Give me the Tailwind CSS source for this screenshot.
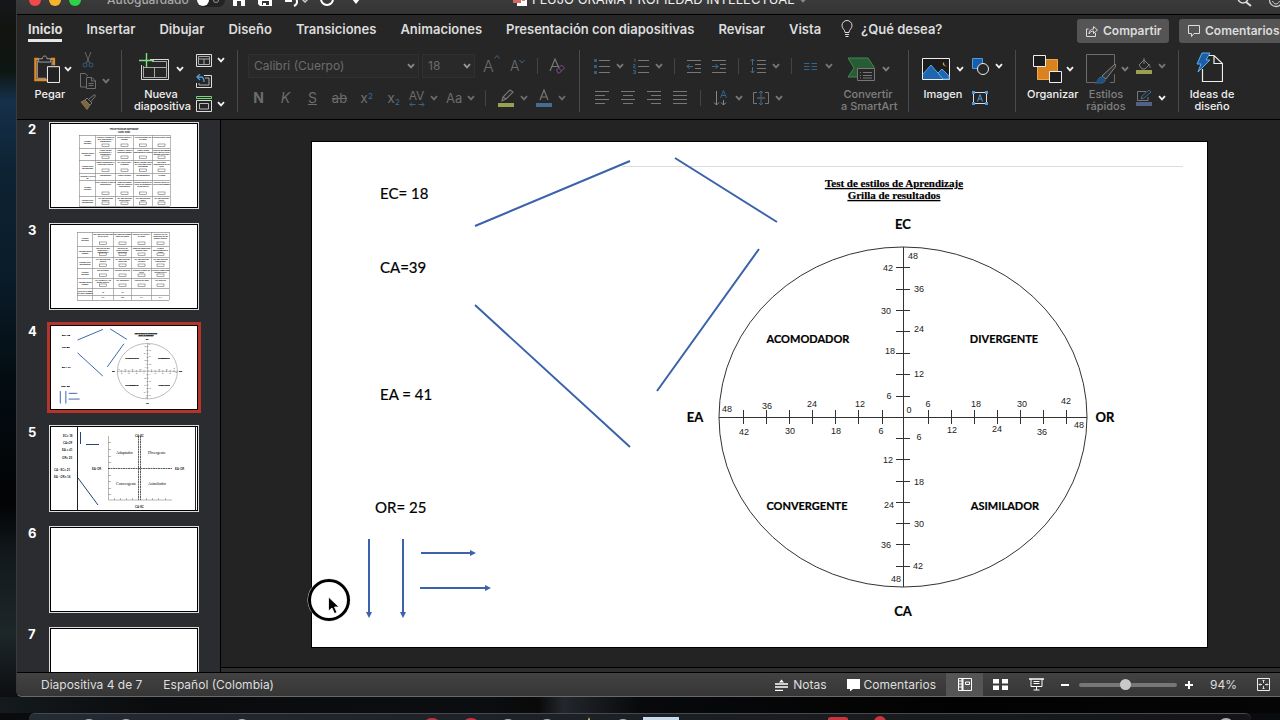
<!DOCTYPE html>
<html lang="es">

<head>
    <meta charset="UTF-8">
    <meta name="viewport" content="width=device-width, initial-scale=1.0">
    <title>FLUJO GRAMA PROPIEDAD INTELECTUAL</title>
    <script src="https://cdn.jsdelivr.net/npm/@tailwindcss/browser@4"></script>
</head>

<body class="h-screen overflow-hidden bg-[#08090b] font-['Inter','Liberation_Sans',sans-serif] text-white">

    <!-- Shared shapes -->
    <svg class="hidden">
        <symbol id="chev" viewBox="0 0 8 6">
            <path d="M1 1.2 4 4.4 7 1.2" fill="none" stroke="currentColor" stroke-width="1.8" />
        </symbol>
    </svg>

    <div class="flex h-full flex-col bg-[linear-gradient(180deg,#15171a_0%,#11130f_5%,#0e1714_10%,#16304a_14%,#0d2233_24%,#0a1c29_38%,#040d13_52%,#020304_70%,#12191c_77%,#1d2629_88%,#0a0b0d_98%)]">

        <!-- App window -->
        <div class="ml-4 flex min-h-0 flex-1 flex-col overflow-hidden rounded-bl-md border-b border-l border-b-[#6a6a6a] border-l-[#3a3a3a] bg-[#262626]">

            <!-- Title bar -->
            <header class="h-[15px] shrink-0 overflow-hidden border-b border-black bg-gradient-to-b from-[#3b3b3b] to-[#343434]">
                <div class="-mt-3.5 flex h-7 items-center">
                    <div class="flex w-[496px] shrink-0 items-center pl-3">
                        <div class="flex gap-2">
                            <button aria-label="Cerrar" class="size-3 rounded-full bg-[#f5484a]"></button>
                            <button aria-label="Minimizar" class="size-3 rounded-full bg-[#f6b52d]"></button>
                            <button aria-label="Maximizar" class="size-3 rounded-full bg-[#2fd145]"></button>
                        </div>
                        <label for="autosave" class="ml-[26px] text-xs font-medium text-[#a8a8a8]">Autoguardado</label>
                        <span class="ml-2 flex h-3.5 w-7 items-center rounded-full bg-[#232323]">
                            <input id="autosave" type="checkbox" class="size-3 appearance-none rounded-full bg-white">
                            <svg class="ml-1 h-2 w-1.5" viewBox="0 0 6 8"><circle cx="3" cy="4" r="2.5" fill="none" stroke="#999" /></svg>
                        </span>
                        <div class="ml-[7px] flex items-center gap-3">
                            <svg class="h-3.5 w-3.5" viewBox="0 0 14 14"><path d="M1 5 7 0l6 5v8H9V8H5v5H1z" fill="#fff" /></svg>
                            <svg class="h-3.5 w-3.5" viewBox="0 0 14 14"><path d="M0 0h14v13H2l-2-2z" fill="#fff" /><path d="M4 8h7v4H4z" fill="#333" /><path d="M5 10h3v2H5z" fill="#fff" /></svg>
                            <svg class="h-3.5 w-6" viewBox="0 0 24 14"><path d="M2 2v6h6M3 7c3-5 10-4 10 2 0 2-1 3-3 4" fill="none" stroke="#fff" stroke-width="2" /><path d="m18 6 3 3 3-3" fill="none" stroke="#ccc" stroke-width="1.5" /></svg>
                            <svg class="h-4 w-3.5" viewBox="0 0 14 16"><circle cx="7" cy="7" r="6" fill="none" stroke="#fff" stroke-width="2" /></svg>
                            <svg class="ml-1 h-3 w-3" viewBox="0 0 12 12"><path d="M2 5h8L6 10z" fill="#fff" /></svg>
                        </div>
                    </div>
                    <svg class="h-3.5 w-3.5 shrink-0" viewBox="0 0 14 14"><path d="M4 0h10v13H4z" fill="#fff" /><path d="M0 2h8v8H0z" fill="#d06a62" /><path d="M9 4h3v4H9z" fill="#d98a84" /></svg>
                    <h1 class="ml-[5px] text-[13px] whitespace-nowrap text-[#f0f0f0]">FLUJO GRAMA PROPIEDAD INTELECTUAL</h1>
                    <svg class="ml-1 h-1.5 w-2 text-[#888]"><use href="#chev" /></svg>
                    <div class="ml-auto flex gap-4">
                        <svg class="h-4 w-4" viewBox="0 0 16 16"><circle cx="7" cy="6" r="5" fill="none" stroke="#ddd" stroke-width="1.5" /><path d="m10 10 5 4" stroke="#ddd" stroke-width="2" /></svg>
                        <svg class="-mr-1 h-4 w-4" viewBox="0 0 16 16"><circle cx="8" cy="8" r="6.5" fill="none" stroke="#ccc" stroke-width="1.3" /><path d="M4.500 9c1.500 4 5.500 4 7 0" fill="none" stroke="#ccc" /></svg>
                    </div>
                </div>
            </header>

            <!-- Ribbon tabs -->
            <nav class="flex h-8 shrink-0 items-center overflow-hidden pl-[11px] text-[13px] font-semibold whitespace-nowrap text-[#dcdcdc]">
                <div class="flex shrink-0 items-start gap-6">
                    <button class="border-b-3 border-[#e8e8e8] pb-px font-bold leading-[18px]">Inicio</button>
                    <button class="leading-[18px]">Insertar</button>
                    <button class="leading-[18px]">Dibujar</button>
                    <button class="leading-[18px]">Diseño</button>
                    <button class="leading-[18px]">Transiciones</button>
                    <button class="leading-[18px]">Animaciones</button>
                    <button class="leading-[18px]">Presentación con diapositivas</button>
                    <button class="leading-[18px]">Revisar</button>
                    <button class="leading-[18px]">Vista</button>
                    <button class="-ml-1 flex items-center gap-2 leading-[18px]">
                        <svg class="h-[18px] w-3" viewBox="0 0 12 18" fill="none" stroke="currentColor"><path d="M4 12.500C4 9.500 1 9 1 5.500a5 5 0 0 1 10 0C11 9 8 9.500 8 12.500zM4 14.500h4M4.500 16.500h3" /></svg>
                        ¿Qué desea?
                    </button>
                </div>
                <div class="ml-auto flex shrink-0 gap-2.5">
                    <button class="flex h-6 w-[92px] items-center gap-[5px] rounded-[3px] bg-[#555] pl-[9px] text-xs">
                        <svg class="h-3 w-3" viewBox="0 0 12 12" fill="none" stroke="#ddd"><path d="M2.500 4H.5v7.500h9V8M3 9c0-3.500 2-5 4.500-5V1.500l4 3.500-4 3.500V6C5.500 6 4 7 3 9z" /></svg>
                        Compartir
                    </button>
                    <button class="-mr-1 flex h-6 w-[105px] items-center gap-[5px] rounded-l-[3px] bg-[#555] pl-[9px] text-xs">
                        <svg class="h-3 w-3" viewBox="0 0 12 12" fill="none" stroke="#ddd"><path d="M.5.5h11v8H6l-2.500 3v-3h-3z" /></svg>
                        Comentarios
                    </button>
                </div>
            </nav>

            <!-- Ribbon -->
            <section class="flex h-[73px] shrink-0 items-start overflow-hidden border-b border-black pt-[3px] text-[11px] leading-3 font-medium text-[#f0f0f0]">

                <!-- Clipboard -->
                <div class="flex h-[62px] w-[105px] shrink-0 border-r border-[#4a4a4a] pl-[11px]">
                    <button class="w-11 self-start">
                        <span class="flex h-[38px] items-center gap-1 pl-1.5">
                            <svg class="h-8 w-7" viewBox="0 0 28 32" fill="none"><path d="M5 5H1.500v23H14M18 5h3.500v7" stroke="#e08a24" stroke-width="2.500" /><path d="M3.500 7v19H13M19.500 7v5" stroke="#b9b9b9" /><path d="M5 8.500V5h4c0-4 5-4 5 0h4v3.500z" stroke="#a9a9a9" /><path d="M14.500 13.500h13v17h-13z" fill="#222" stroke="#fff" /></svg>
                            <svg class="h-1.5 w-2 shrink-0"><use href="#chev" /></svg>
                        </span>
                        Pegar
                    </button>
                    <div class="ml-2 grid w-8 grid-rows-3 text-[#777]">
                        <button aria-label="Cortar" class="flex items-center">
                            <svg class="h-4 w-4" viewBox="0 0 16 16" fill="none"><path d="m5 0 4.500 11M11 0 6.500 11" stroke="#666" /><circle cx="5" cy="13" r="2" stroke="#2f5f86" /><circle cx="11" cy="13" r="2" stroke="#2f5f86" /></svg>
                        </button>
                        <button aria-label="Copiar" class="flex items-center gap-1.5">
                            <svg class="h-4 w-4 shrink-0" viewBox="0 0 16 16" fill="none" stroke="#6f6f6f"><path d="M6 14H.5V.5H5L8 3M6.500 4.500H12l3.500 3.500v7.500h-9zM11.500 4.500V8h4M8.500 10.500h5M8.500 12.500h5" /></svg>
                            <svg class="h-1.5 w-2 shrink-0"><use href="#chev" /></svg>
                        </button>
                        <button aria-label="Copiar formato" class="flex items-center">
                            <svg class="h-4 w-4" viewBox="0 0 16 16" fill="none" stroke="#777"><path d="m1 8 4-2 5 5-3 4.500z" fill="#7c6843" stroke="#8a744b" /><path d="m5 6 2-2 5 5-2 2zM9 5l5.500-4.500L15.500 2 11 7.500" /></svg>
                        </button>
                    </div>
                </div>

                <!-- Slides -->
                <div class="flex h-[62px] w-[116px] shrink-0 border-r border-[#4a4a4a] pl-3">
                    <button class="w-[54px] self-start whitespace-nowrap">
                        <span class="flex h-[38px] items-center gap-1.5 pl-[5px]">
                            <svg class="h-8 w-[31px] shrink-0" viewBox="0 0 31 32" fill="none"><path d="M11 6.500h18.500v20h-27V12" stroke="#d8d8d8" /><path d="M13 8.500h14.500v16h-23V13M4.500 14.500h23M15.500 15v9.500" stroke="#a8a8a8" /><path d="M7.500 0v14M0 7.500h15" stroke="#7de07f" stroke-width="1.400" /></svg>
                            <svg class="h-1.5 w-2 shrink-0"><use href="#chev" /></svg>
                        </span>
                        Nueva<br>diapositiva
                    </button>
                    <div class="ml-2 grid w-8 grid-rows-3">
                        <button aria-label="Diseño de diapositiva" class="flex items-center gap-1">
                            <svg class="h-[13px] w-4 shrink-0" viewBox="0 0 16 13" fill="none"><path d="M.5.5h15v12H.5z" stroke="#ddd" /><path d="M2.500 2.500h11v8h-11zM2.500 5h11M8 5v5.500" stroke="#aaa" /></svg>
                            <svg class="ml-px h-1.5 w-2 shrink-0"><use href="#chev" /></svg>
                        </button>
                        <button aria-label="Restablecer" class="flex items-center">
                            <svg class="h-3.5 w-4" viewBox="0 0 16 14" fill="none"><path d="M8 1.500h7.500v12H.5V9" stroke="#ddd" /><path d="M9 4h4v7H3V9" stroke="#aaa" /><path d="M4 0 1 3l3 3M1 3h4c2 0 3 2 3 5" stroke="#4d9fdb" stroke-width="1.300" /></svg>
                        </button>
                        <button aria-label="Sección" class="flex items-center gap-1 pt-1">
                            <svg class="h-4 w-4 shrink-0" viewBox="0 0 16 16" fill="none"><path d="M.5 2.500V.5h15v2z" stroke="#76d879" /><path d="M.5 4.500h15v11H.5z" stroke="#ddd" /><path d="M3.500 7.500h9v5.500h-9z" stroke="#bbb" /></svg>
                            <svg class="ml-px h-1.5 w-2 shrink-0"><use href="#chev" /></svg>
                        </button>
                    </div>
                </div>

                <!-- Font -->
                <div class="flex h-[62px] w-[342px] shrink-0 flex-col gap-2 border-r border-[#4a4a4a] pt-1 text-[#6c6c6c]">
                    <div class="flex h-6 items-center pl-2.5">
                        <span class="relative flex h-6 w-[171px] items-center">
                            <select aria-label="Fuente" class="size-full appearance-none border border-[#303030] bg-[#292929] pl-[5px] text-xs font-normal">
                                <option>Calibri (Cuerpo)</option>
                            </select>
                            <svg class="pointer-events-none absolute right-1 h-1.5 w-2 text-[#888]"><use href="#chev" /></svg>
                        </span>
                        <span class="relative ml-[3px] flex h-6 w-[53px] items-center">
                            <select aria-label="Tamaño" class="size-full appearance-none border border-[#303030] bg-[#292929] pl-[5px] text-xs font-normal">
                                <option>18</option>
                            </select>
                            <svg class="pointer-events-none absolute right-1 h-1.5 w-2 text-[#999]"><use href="#chev" /></svg>
                        </span>
                        <button aria-label="Aumentar fuente" class="ml-2 flex w-[17px] text-base font-light">A<svg class="h-1.5 w-1.5 shrink-0" viewBox="0 0 6 6"><path d="m.5 4.500 2.500-3 2.500 3" fill="none" stroke="#3b6485" /></svg></button>
                        <button aria-label="Disminuir fuente" class="ml-2.5 flex w-4 items-center text-sm font-light">A<svg class="-mt-2 h-1.5 w-1.5 shrink-0" viewBox="0 0 6 6"><path d="m.5 1 2.500 3L5.500 1" fill="none" stroke="#3b6485" /></svg></button>
                        <span class="mx-[11px] h-4 w-px bg-[#444]"></span>
                        <button aria-label="Borrar formato">
                            <svg class="h-4 w-[18px]" viewBox="0 0 18 16" fill="none"><path d="M1 13 6 1l4 9M3 8.500h6" stroke="#777" stroke-width="1.200" /><path d="m7.500 12 5-5 3 3-5 5H9z" stroke="#804a8c" /><path d="m9.500 10 3 3" stroke="#804a8c" /></svg>
                        </button>
                    </div>
                    <div class="flex h-6 items-center pl-[7px] text-sm font-normal">
                        <button aria-label="Negrita" class="w-[27px] font-bold">N</button>
                        <button aria-label="Cursiva" class="w-[27px] italic">K</button>
                        <button aria-label="Subrayado" class="w-[27px] underline">S</button>
                        <button aria-label="Tachado" class="w-[27px] text-[13px] line-through">ab</button>
                        <button aria-label="Superíndice" class="w-[27px]">x<sup class="text-[8px] text-[#3b6d9a]">2</sup></button>
                        <button aria-label="Subíndice" class="w-[27px]">x<sub class="text-[8px] text-[#3b6d9a]">2</sub></button>
                        <button aria-label="Espaciado entre caracteres" class="flex items-center gap-1 text-xs">
                            <span class="flex w-[19px] flex-col items-center leading-3">AV<svg class="h-[5px] w-4" viewBox="0 0 16 5"><path d="M3 .5 1 2.500l2 2M1 2.500h5.500M13 .5l2 2-2 2M15 2.500H9.500" fill="none" stroke="#3b6485" /></svg></span>
                            <svg class="h-1.5 w-2"><use href="#chev" /></svg>
                        </button>
                        <button aria-label="Mayúsculas y minúsculas" class="ml-2 flex items-center gap-[5px] text-[13px]">Aa<svg class="h-1.5 w-2"><use href="#chev" /></svg></button>
                        <span class="mr-3 ml-2.5 h-4 w-px bg-[#444]"></span>
                        <button aria-label="Resaltado" class="flex items-center gap-1.5">
                            <svg class="h-[18px] w-4" viewBox="0 0 16 18"><path d="m4 12 1-4 7-7 3 2-7 7zM5 8l3 2" fill="none" stroke="#777" stroke-width="1.200" /><path d="M0 14h16v4H0z" fill="#98a052" /></svg>
                            <svg class="h-1.5 w-2"><use href="#chev" /></svg>
                        </button>
                        <button aria-label="Color de fuente" class="ml-2 flex items-center gap-1.5">
                            <svg class="h-[18px] w-4" viewBox="0 0 16 18"><path d="M4 11 8 1l4 10M5.500 8h5" fill="none" stroke="#777" stroke-width="1.200" /><path d="M0 14h16v4H0z" fill="#436c91" /></svg>
                            <svg class="h-1.5 w-2"><use href="#chev" /></svg>
                        </button>
                    </div>
                </div>

                <!-- Paragraph -->
                <div class="flex h-[62px] w-[329px] shrink-0 border-r border-[#4a4a4a] pl-3.5 text-[#777]">
                    <div class="flex w-[247px] flex-col gap-2 pt-1">
                        <div class="flex h-6 items-center gap-[9px]">
                            <button aria-label="Viñetas" class="flex items-center gap-1.5">
                                <svg class="h-4 w-4" viewBox="0 0 16 16"><path d="M5 2.500h11M5 8.500h11M5 14.500h11" stroke="#777" /><path d="M0 1h3v3H0zM0 7h3v3H0zM0 13h3v3H0z" fill="#325d80" /></svg>
                                <svg class="h-1.5 w-2"><use href="#chev" /></svg>
                            </button>
                            <button aria-label="Numeración" class="flex items-center gap-1.5">
                                <svg class="h-4 w-4" viewBox="0 0 16 16"><path d="M5 2.500h11M5 8.500h11M5 14.500h11" stroke="#777" /><path d="M1 1h1v3M0 6.500h2v2H.5v1.500H3M0 12.500h2.500v3H0M1 14h1.500" fill="none" stroke="#325d80" /></svg>
                                <svg class="h-1.5 w-2"><use href="#chev" /></svg>
                            </button>
                            <span class="mx-0.5 h-4 w-px bg-[#444]"></span>
                            <button aria-label="Disminuir sangría"><svg class="h-4 w-4" viewBox="0 0 16 16" fill="none"><path d="M1 2.500h14M9 6.500h6M9 10.500h6M1 14.500h14" stroke="#777" /><path d="M7 8.500H1M3.500 6 1 8.500 3.500 11" stroke="#3b6d94" /></svg></button>
                            <button aria-label="Aumentar sangría"><svg class="h-4 w-4" viewBox="0 0 16 16" fill="none"><path d="M1 2.500h14M9 6.500h6M9 10.500h6M1 14.500h14" stroke="#777" /><path d="M1 8.500h6M4.500 6 7 8.500 4.500 11" stroke="#3b6d94" /></svg></button>
                            <span class="mx-0.5 h-4 w-px bg-[#444]"></span>
                            <button aria-label="Interlineado" class="flex items-center gap-1.5">
                                <svg class="h-4 w-4" viewBox="0 0 16 16" fill="none"><path d="M7 2.500h9M7 6.500h9M7 10.500h9M7 14.500h9" stroke="#777" /><path d="M2.500 1v6M.5 3l2-2 2 2M2.500 9v6M.5 13l2 2 2-2" stroke="#3b6d94" /></svg>
                                <svg class="h-1.5 w-2"><use href="#chev" /></svg>
                            </button>
                            <span class="mx-0.5 h-4 w-px bg-[#444]"></span>
                            <button aria-label="Columnas" class="flex items-center gap-1.5">
                                <svg class="h-4 w-4" viewBox="0 0 16 16"><path d="M1 5.500h5.500M1 8.500h5.500M1 11.500h5.500M8.500 5.500H14M8.500 8.500H14M8.500 11.500H14" stroke="#34658c" /></svg>
                                <svg class="h-1.5 w-2"><use href="#chev" /></svg>
                            </button>
                        </div>
                        <div class="flex h-6 items-center gap-2.5">
                            <button aria-label="Alinear a la izquierda"><svg class="h-4 w-4" viewBox="0 0 16 16" stroke="#777"><path d="M1 1.500h14M1 5.500h10M1 9.500h14M1 13.500h10" /></svg></button>
                            <button aria-label="Centrar"><svg class="h-4 w-4" viewBox="0 0 16 16" stroke="#777"><path d="M1 1.500h14M3 5.500h10M1 9.500h14M3 13.500h10" /></svg></button>
                            <button aria-label="Alinear a la derecha"><svg class="h-4 w-4" viewBox="0 0 16 16" stroke="#777"><path d="M1 1.500h14M5 5.500h10M1 9.500h14M5 13.500h10" /></svg></button>
                            <button aria-label="Justificar"><svg class="h-4 w-4" viewBox="0 0 16 16" stroke="#777"><path d="M1 1.500h14M1 5.500h14M1 9.500h14M1 13.500h14" /></svg></button>
                            <span class="mx-0.5 h-4 w-px bg-[#444]"></span>
                            <button aria-label="Dirección del texto" class="flex items-center gap-1.5">
                                <svg class="h-4 w-4" viewBox="0 0 16 16" fill="none"><path d="M3.500 1v14M1 12.500 3.500 15 6 12.500M10.500 10v5M8 12.500l2.500 2.500 2.500-2.500" stroke="#888" /><path d="m7.500 8 3-7.500 3 7.500M8.500 5.500h4" stroke="#34658c" /></svg>
                                <svg class="h-1.5 w-2"><use href="#chev" /></svg>
                            </button>
                            <button aria-label="Alinear texto" class="flex items-center gap-1.5">
                                <svg class="h-4 w-4" viewBox="0 0 16 16" fill="none"><path d="M4 2.500H.5v11H4M12 2.500h3.500v11H12M4 8h8" stroke="#777" /><path d="M8 7V1M6 3l2-2 2 2M8 9v6M6 13l2 2 2-2" stroke="#3b6d94" /></svg>
                                <svg class="h-1.5 w-2"><use href="#chev" /></svg>
                            </button>
                        </div>
                    </div>
                    <button class="w-[54px] self-start whitespace-nowrap text-[#808080]">
                        <span class="flex h-[38px] items-center gap-1.5 pl-[7px]">
                            <svg class="h-6 w-7 shrink-0" viewBox="0 0 28 24"><path d="M0 1h20l6 9v3H10v7H0l6-9z" fill="#285c34" stroke="#3f8a4e" /><path d="M9.500 11.500h17v12h-17z" fill="#262626" stroke="#777" /><path d="M12 15.500h1M12 18.500h1M12 21h1M15 15.500h9M15 18.500h9M15 21h9" stroke="#777" /></svg>
                            <svg class="h-1.5 w-2 shrink-0"><use href="#chev" /></svg>
                        </span>
                        Convertir<br>a SmartArt
                    </button>
                </div>

                <!-- Insert -->
                <div class="flex h-[62px] w-[107px] shrink-0 border-r border-[#4a4a4a] pl-[13px]">
                    <button class="w-[42px] self-start">
                        <span class="flex h-[38px] items-center gap-1.5">
                            <svg class="h-[22px] w-7 shrink-0" viewBox="0 0 28 22"><path d="M.5.5h27v21H.5z" fill="#1c1c1c" stroke="#eee" /><path d="M1 16 9 7l12 14H1z" fill="#1f66b0" /><path d="m1 16 8-9 12 14" fill="none" stroke="#55a5e6" /><path d="m16 15 4-4 7 7v3h-6z" fill="#1f66b0" stroke="#55a5e6" /><path d="M22 4c0 3 1 4 3 4-3 1-6-2-3-4z" fill="#e8913a" /></svg>
                            <svg class="h-1.5 w-2 shrink-0"><use href="#chev" /></svg>
                        </span>
                        Imagen
                    </button>
                    <div class="ml-2 flex flex-col gap-2 pt-1">
                        <button aria-label="Formas" class="flex h-6 items-center gap-1.5">
                            <svg class="h-[17px] w-[17px]" viewBox="0 0 17 17"><path d="M.5.500h10v10H.5z" fill="#1a5da8" stroke="#4a9de0" /><circle cx="11" cy="11" r="5.500" fill="#262626" stroke="#eee" /></svg>
                            <svg class="h-1.5 w-2"><use href="#chev" /></svg>
                        </button>
                        <button aria-label="Cuadro de texto" class="flex h-6 items-center">
                            <svg class="h-3.5 w-4" viewBox="0 0 16 14"><path d="M1.500 1.500h13v11h-13z" fill="none" stroke="#ddd" /><path d="M0 0h3v3H0zM13 0h3v3h-3zM0 11h3v3H0zM13 11h3v3h-3z" fill="#4a9de0" /><path d="m5.500 10.500 2.500-7 2.500 7M6.500 8h3" fill="none" stroke="#4a9de0" /></svg>
                        </button>
                    </div>
                </div>

                <!-- Arrange -->
                <div class="flex h-[62px] w-[163px] shrink-0 border-r border-[#4a4a4a] pl-[11px]">
                    <button class="w-[50px] self-start">
                        <span class="flex h-[38px] items-center gap-1 pl-1.5">
                            <svg class="h-7 w-[29px] shrink-0" viewBox="0 0 29 28"><path d="M4.500 4.500h20v20h-20z" fill="#d9821f" stroke="#f0a648" /><path d="M.5.500h12v11H.5zM16.500 16.500h12v11h-12z" fill="#1d1d1d" stroke="#eee" /></svg>
                            <svg class="h-1.5 w-2 shrink-0"><use href="#chev" /></svg>
                        </span>
                        Organizar
                    </button>
                    <button class="ml-[9px] w-10 self-start text-[#808080]">
                        <span class="flex h-[38px] items-center gap-[5px]">
                            <svg class="h-[30px] w-[30px] shrink-0" viewBox="0 0 30 30" fill="none"><path d="M17 28.500H.5V.5h28v10M28.500 20v8.500H24" stroke="#6d6d6d" /><path d="m16 22 13-12 1 2-10 13z" fill="#333" stroke="#888" /><path d="M9 29c3 0 2-5 6-6 5 0 6 5 1 6z" fill="#1f4f7c" stroke="#31648f" /></svg>
                            <svg class="h-1.5 w-2 shrink-0"><use href="#chev" /></svg>
                        </span>
                        Estilos<br>rápidos
                    </button>
                    <div class="ml-2.5 flex flex-col gap-2 pt-1">
                        <button aria-label="Relleno de forma" class="flex h-6 items-center gap-1.5">
                            <svg class="h-4 w-4" viewBox="0 0 16 16"><path d="m3 7 5-5 5 5-4 4H6zM8 6V0M13 6c1 2 1 3 1 4" fill="none" stroke="#808080" /><path d="M0 12h16v4H0z" fill="#98a052" /></svg>
                            <svg class="h-1.5 w-2 text-[#777]"><use href="#chev" /></svg>
                        </button>
                        <button aria-label="Contorno de forma" class="flex h-6 items-center gap-1.5">
                            <svg class="h-4 w-4" viewBox="0 0 16 16"><path d="M10 1.500H1.500v9H12V7" fill="none" stroke="#777" /><path d="m5 9 1-3 7-6 2 2-7 6z" fill="none" stroke="#3b6d94" /><path d="M0 12h16v4H0z" fill="#506387" /></svg>
                            <svg class="h-1.5 w-2"><use href="#chev" /></svg>
                        </button>
                    </div>
                </div>

                <!-- Designer -->
                <button class="ml-2.5 w-[46px] shrink-0 whitespace-nowrap">
                    <span class="flex h-[38px] items-center justify-center pr-1.5 pb-1">
                        <svg class="h-[31px] w-[27px]" viewBox="0 0 27 31"><path d="M10 3.500h8l8.500 8v18H6.500V17M18 3.500v8h8.500" fill="none" stroke="#eee" stroke-width="1.200" /><path d="M6 1h8l-4 7h4L2 20l3-8H1z" fill="#1c5ea6" stroke="#5db0f0" /></svg>
                    </span>
                    Ideas de<br>diseño
                </button>
            </section>

            <!-- Thumbnails and slide canvas -->
            <div class="flex min-h-0 flex-1">
                <aside class="w-[204px] shrink-0 overflow-hidden border-r border-black bg-[#2b2c30] pt-0.5 pl-[11px]">
                    <ol class="flex flex-col gap-3.5 text-[13px] leading-[14px] font-bold">
                        <li class="flex h-[87px] shrink-0"><span class="w-[21px]">2</span><svg id="thumb-2" viewBox="0 0 146 83" class="h-[87px] w-[150px] border border-[#ddd] bg-white p-px outline-1 -outline-offset-2 outline-black"></svg></li>
                        <li class="flex h-[87px] shrink-0"><span class="w-[21px]">3</span><svg id="thumb-3" viewBox="0 0 146 83" class="h-[87px] w-[150px] border border-[#ddd] bg-white p-px outline-1 -outline-offset-2 outline-black"></svg></li>
                        <li class="flex h-[87px] shrink-0"><span class="w-[21px]">4</span><svg viewBox="0 0 895 505" class="h-[87px] w-[150px] border border-[#b5352a] bg-white p-px ring-2 ring-[#b5352a] outline-1 -outline-offset-2 outline-black [--hair:2] [--line:6] [--text-edge:1]"><use href="#slide-content" /></svg></li>
                        <li class="flex h-[87px] shrink-0"><span class="w-[21px]">5</span>
                            <svg viewBox="0 0 146 83" class="h-[87px] w-[150px] border border-[#ddd] bg-white p-px outline-1 -outline-offset-2 outline-black">
                                <path d="M26.500 0v83M144.500 0v83" stroke="#222" />
                                <path d="M29.500 5v12M35 17.500h13M27 51l20 27" stroke="#27427c" fill="none" />
                                <path d="M57.500 9v64H121M57 15.500h3M57 22.500h3M57 29.500h3M57 35.500h3M57 48.500h3M57 54.500h3M57 61.500h3M57 67.500h3M63.500 71v2M69.500 71v2M75.500 71v2M81.500 71v2M95.500 71v2M101.500 71v2M107.500 71v2M114.500 71v2" stroke="#888" stroke-width=".6" fill="none" />
                                <path d="M87.500 9v64M89.500 9v64M57 41.500h64" stroke="#333" stroke-width=".8" stroke-dasharray="2 .5" />
                                <g font-family="Lato" font-weight="700" font-size="3" fill="#222">
                                    <text x="12" y="10">EC= 18</text><text x="12" y="17">CA=39</text><text x="11" y="24">EA = 41</text><text x="11" y="32">OR= 25</text>
                                    <text x="3" y="44">CA - EC= 21</text><text x="3" y="51">EA - OR= 16</text>
                                    <text x="84" y="10">CA-EC</text><text x="84" y="81">CA-EC</text><text x="41" y="43">EA-OR</text><text x="124" y="43">EA-OR</text>
                                </g>
                                <g font-family="Liberation Serif" font-weight="400" font-size="4">
                                    <text x="65" y="27">Adaptador</text><text x="97" y="27">Divergente</text>
                                    <text x="65" y="58">Convergente</text><text x="97" y="58">Asimilador</text>
                                </g>
                            </svg>
                        </li>
                        <li class="flex h-[87px] shrink-0"><span class="w-[21px]">6</span><svg class="h-[87px] w-[150px] border border-[#ddd] bg-white outline-1 -outline-offset-2 outline-black"></svg></li>
                        <li class="flex h-[87px] shrink-0"><span class="w-[21px]">7</span><svg class="h-[87px] w-[150px] border border-[#ddd] bg-white outline-1 -outline-offset-2 outline-black"></svg></li>
                    </ol>
                </aside>

                <div class="flex min-w-0 flex-1 flex-col bg-[#232323]">
                    <main class="relative min-h-0 flex-1 border-b border-black pt-[22px] pr-[73px] pl-[91px]">
                        <svg viewBox="0 0 895 505" class="w-full bg-white outline-1 outline-black">
                            <g id="slide-content">
                                <path d="M310 24.500h561" stroke="#dcdcdc" />
                                <g font-family="Lato, sans-serif" font-size="15" font-weight="400" stroke="#000" class="[stroke-width:var(--text-edge,0.2)]">
                                    <text x="68" y="57">EC= 18</text>
                                    <text x="68" y="131">CA=39</text>
                                    <text x="68" y="258">EA = 41</text>
                                    <text x="63" y="371">OR= 25</text>
                                </g>
                                <g fill="none" stroke="#3b62ab" class="[stroke-width:var(--line,2)]">
                                    <path d="m163 84 155-65M363 16l102 64M447 107 345 249M163 163l155 142" />
                                    <path d="M57 397v73M91 397v73M109 411h49M108 446h65" />
                                </g>
                                <path d="M54 470h6l-3 6zM88 470h6l-3 6zM158 408v6l6-3zM173 443v6l6-3z" fill="#3b62ab" />
                                <g font-family="Liberation Serif, serif" font-size="11" font-weight="700" text-anchor="middle" text-decoration="underline" stroke="#000" class="[stroke-width:var(--text-edge,0.2)]">
                                    <text x="582" y="45">Test de estilos de Aprendizaje</text>
                                    <text x="582" y="57">Grilla de resultados</text>
                                </g>
                                <g fill="none" stroke="#333" class="[stroke-width:var(--hair,1)]">
                                    <ellipse cx="591" cy="275" rx="184" ry="170" />
                                    <path d="M407 275.500h368M591.500 105v340" />
                                    <path d="M431.500 268v14M454.500 268v14M477.500 268v14M500.500 268v14M523.500 268v14M546.500 268v14M570.500 268v14M616.500 268v14M639.500 268v14M662.500 268v14M685.500 268v14M708.500 268v14M731.500 268v14M754.500 268v14" />
                                    <path d="M584 125.500h14M584 147.500h14M584 168.500h14M584 189.500h14M584 211.500h14M584 232.500h14M584 254.500h14M584 296.500h14M584 317.500h14M584 339.500h14M584 360.500h14M584 381.500h14M584 402.500h14M584 424.500h14" />
                                </g>
                                <g font-family="Lato, sans-serif" font-weight="700" text-anchor="middle" stroke="#000" class="[stroke-width:var(--text-edge,0.2)]">
                                    <g font-size="13">
                                        <text x="591" y="87">EC</text><text x="591" y="474">CA</text><text x="383" y="280">EA</text><text x="793" y="280">OR</text>
                                    </g>
                                    <g font-size="11">
                                        <text x="496" y="201">ACOMODADOR</text><text x="692" y="201">DIVERGENTE</text><text x="495" y="368">CONVERGENTE</text><text x="693" y="368">ASIMILADOR</text>
                                    </g>
                                </g>
                                <g id="scale" font-family="Liberation Sans, sans-serif" font-size="9" font-weight="400" text-anchor="middle" fill="#222"></g>
                            </g>
                        </svg>

                        <!-- Pointer with click halo -->
                        <svg class="absolute top-[458px] left-[86px] h-11 w-11" viewBox="0 0 44 44">
                            <circle cx="22" cy="22" r="21" fill="none" stroke="#ddd" stroke-width="1" />
                            <circle cx="22" cy="22" r="19.500" fill="#fff" stroke="#000" stroke-width="3" />
                            <path d="M21.500 19v14l3.500-3 2.500 5.500 2.500-1-2.500-5.500h4.500z" stroke="#fff" stroke-width=".8" />
                        </svg>
                    </main>
                    <div class="h-1 shrink-0 bg-[#2e2e2e]"></div>
                </div>
            </div>

            <!-- Status bar -->
            <footer class="flex h-6 shrink-0 items-center overflow-hidden border-t border-black bg-gradient-to-b from-[#424242] to-[#363636] pl-6 text-xs whitespace-nowrap text-[#dedede]">
                <span>Diapositiva 4 de 7</span>
                <span class="ml-[21px]">Español (Colombia)</span>
                <div class="ml-auto flex h-full items-center">
                    <button class="flex items-center gap-[5px]">
                        <svg class="h-3 w-[13px]" viewBox="0 0 13 12"><path d="M4 3.500 6.500.5 9 3.500z" fill="#fff" /><path d="M0 5h13M0 8h13M0 11.300h8" stroke="#fff" stroke-width="1.300" /></svg>
                        Notas
                    </button>
                    <button class="ml-5 flex items-center gap-1">
                        <svg class="h-3 w-[13px]" viewBox="0 0 13 12"><path d="M0 0h13v10H6l-3 2.500V10H0z" fill="#fff" /></svg>
                        Comentarios
                    </button>
                    <button aria-label="Normal" class="ml-2.5 flex h-full w-[37px] items-center justify-center bg-[#555]">
                        <svg class="h-[13px] w-3.5" viewBox="0 0 14 13" fill="none" stroke="#fff"><path d="M.5.5h13v12H.5z" /><path d="M4.500 1v11" stroke-width="2" /><path d="M1 3h3M1 6h3M1 9h3" /><path d="M7.500 4h4v2.500h-4z" /></svg>
                    </button>
                    <button aria-label="Clasificador" class="ml-2.5">
                        <svg class="h-[11px] w-[15px]" viewBox="0 0 15 11" fill="#fff"><path d="M0 0h6v4.500H0zM9 0h6v4.500H9zM0 6.500h6V11H0zM9 6.500h6V11H9z" /></svg>
                    </button>
                    <button aria-label="Presentación" class="ml-[21px]">
                        <svg class="h-[13px] w-[15px]" viewBox="0 0 15 13" fill="none" stroke="#fff"><path d="M0 1h15" stroke-width="1.500" /><path d="M2 1v7.500h11V1M4.500 3.500h6M4.500 5.500h6M7.500 9v3M4.500 12h6" /></svg>
                    </button>
                    <button aria-label="Alejar" class="ml-[17px] h-0.5 w-2 bg-white"></button>
                    <input aria-label="Zoom" type="range" value="47" class="ml-2.5 h-1 w-[98px] appearance-none rounded-full bg-[#777] [&::-webkit-slider-thumb]:size-[11px] [&::-webkit-slider-thumb]:appearance-none [&::-webkit-slider-thumb]:rounded-full [&::-webkit-slider-thumb]:bg-[#c9c9c9]">
                    <button aria-label="Acercar" class="ml-2">
                        <svg class="h-2 w-2" viewBox="0 0 8 8"><path d="M0 4h8M4 0v8" stroke="#fff" stroke-width="2" /></svg>
                    </button>
                    <span class="ml-[17px]">94%</span>
                    <button aria-label="Ajustar a la ventana" class="mr-2.5 ml-5">
                        <svg class="h-[13px] w-[13px]" viewBox="0 0 13 13" fill="none" stroke="#eee"><path d="M.5.5h12v12H.5z" /><path d="M6.500 2v3M6.500 8v3M2 6.500h3M8 6.500h3M5.500 3l1-1 1 1M5.500 10l1 1 1-1M3 5.500l-1 1 1 1M10 5.500l1 1-1 1" stroke-width=".9" /></svg>
                    </button>
                </div>
            </footer>
        </div>

        <!-- Desktop gap and dock -->
        <div class="h-4 shrink-0 bg-[linear-gradient(90deg,#141a1d_0%,#0a0b0d_12%,#0b0d10_38%,#090909_42%,#23262c_44%,#08090b_50%,#020202_75%,#050505_100%)]"></div>
        <div class="mx-[29px] h-[7px] shrink-0 overflow-hidden rounded-t-md border-t border-[#454a50] bg-gradient-to-r from-[#252b33] via-[#1c1f24] to-[#151517]">
            <svg class="h-1.5 w-full" viewBox="0 0 1222 6" preserveAspectRatio="xMinYMin slice">
                <g fill="#aeb4ba"><circle cx="60" cy="13" r="8" /><circle cx="97" cy="13" r="8" /><circle cx="213" cy="13" r="8" /><circle cx="479" cy="13" r="8" /><circle cx="518" cy="13" r="8" /><circle cx="594" cy="13" r="8" /><circle cx="1197" cy="12" r="8" /></g>
                <g fill="#c9353c"><circle cx="403" cy="14" r="10" /><circle cx="442" cy="14" r="10" /><path d="M799 6V5q0-2 3-2h14q3 0 3 2v1z" /><circle cx="851" cy="8" r="6" /></g>
                <path d="M614 3h36v3h-36z" fill="#c9dcec" />
                <path d="m559 6 1-3 1 3z" fill="#e6d05a" />
            </svg>
        </div>
    </div>

    <script>
        const SVG_NS = "http://www.w3.org/2000/svg";

        const addShape = function (parent, tag, attrs, text) {
            const el = document.createElementNS(SVG_NS, tag);
            Object.keys(attrs).forEach(function (key) {
                el.setAttribute(key, attrs[key]);
            });
            if (text !== undefined) {
                el.textContent = text;
            }
            parent.appendChild(el);
        };

        // Axis numbers: [value, x, baseline]
        const scaleLabels = [
            [48, 601, 117], [36, 607, 150], [24, 607, 190], [12, 607, 235], [0, 597, 271],
            [42, 576, 129], [30, 574, 172], [18, 578, 212], [6, 577, 257],
            [48, 415, 270], [36, 455, 267], [24, 500, 265], [12, 548, 265],
            [6, 616, 265], [18, 664, 265], [30, 710, 265], [42, 754, 262],
            [42, 432, 293], [30, 478, 292], [18, 524, 292], [6, 569, 292],
            [12, 640, 291], [24, 685, 290], [36, 730, 293], [48, 767, 286],
            [6, 607, 298], [12, 576, 321], [18, 607, 343], [24, 577, 366],
            [30, 607, 385], [36, 574, 406], [42, 606, 427], [48, 584, 440]
        ];
        scaleLabels.forEach(function (label) {
            addShape(document.getElementById("scale"), "text", { x: label[1], y: label[2] }, label[0]);
        });

        // Questionnaire tables in the small slides
        const drawTable = function (id, cols, rows, cells) {
            const svg = document.getElementById(id);
            const right = cols[cols.length - 1];
            rows.forEach(function (y) {
                addShape(svg, "path", { d: "M" + cols[0] + " " + (y + 0.5) + "H" + right, stroke: "#777", "stroke-width": 0.6 });
            });
            cols.forEach(function (x) {
                addShape(svg, "path", { d: "M" + (x + 0.5) + " " + rows[0] + "V" + rows[rows.length - 1], stroke: "#888", "stroke-width": 0.6 });
            });
            cells.forEach(function (row, r) {
                row.forEach(function (lines, c) {
                    const mid = (cols[c] + cols[c + 1]) / 2 + 0.5;
                    const height = rows[r + 1] - rows[r];
                    const top = c === 0 ? rows[r] + height / 2 : rows[r] + 2.6;
                    lines.split("|").forEach(function (line, i) {
                        addShape(svg, "text", { x: mid, y: top + i * 2.4, "font-size": 2.1, "font-weight": 700, "text-anchor": "middle", "font-family": "Liberation Serif" }, line);
                    });
                    if (c > 0 && height > 9) {
                        addShape(svg, "rect", { x: mid - 3.5, y: rows[r] + height - 4, width: 7, height: 2.6, fill: "#fff", stroke: "#555", "stroke-width": 0.5 });
                    }
                });
            });
        };

        drawTable("thumb-2", [28, 44, 64, 82, 101, 119], [11, 24, 36, 49, 56, 72, 82], [
            ["Cuando|aprendo", "Prefiero valerme de|mis sensaciones y|sentimientos", "Prefiero mirar y|atender", "Prefiero pensar en|las ideas", "Prefiero hacer cosas"],
            ["Aprendo mejor|cuando", "Confío en mis|corazonadas y|sentimientos", "Atiendo y observo|cuidadosamente", "Confío en mis|pensamientos lógicos", "Trabajo duramente|para que las cosas|queden realizadas"],
            ["Cuando estoy|aprendiendo", "Tengo sentimientos y|reacciones fuertes", "Soy reservado y|tranquilo", "Busco razonar sobre|las cosas que están|sucediendo", "Me siento|responsable de las|cosas"],
            ["Aprendo a través|de", "Sentimientos", "Observaciones", "Razonamientos", "Acciones"],
            ["Cuando|aprendo", "Estoy abierto a nuevas|experiencias", "Tomo en cuenta|todos los aspectos|relacionados", "Prefiero analizar las|cosas dividiéndolas|en sus partes", "Prefiero hacer las|cosas directamente"],
            ["Cuando estoy|aprendiendo", "Soy una persona|intuitiva", "Soy una persona|observadora", "Soy una persona|lógica", "Soy una persona|activa"]
        ]);
        addShape(document.getElementById("thumb-2"), "text", { x: 73, y: 5.5, "font-size": 2, "font-weight": 700, "text-anchor": "middle" }, "Test de estilos de aprendizaje");
        addShape(document.getElementById("thumb-2"), "text", { x: 73, y: 8.5, "font-size": 2, "font-weight": 700, "text-anchor": "middle" }, "(Autor: Kolb)");

        drawTable("thumb-3", [26, 41, 62, 80, 100, 118], [7, 21, 32, 43, 53, 63, 70, 75], [
            ["Cuando|aprendo", "Me siento involucrado|en las cosas", "Me tomo mi tiempo|antes de actuar", "Prefiero las teorías y|las ideas", "Prefiero ver los|resultados de mi|propio trabajo"],
            ["Aprendo mejor|cuando", "Me baso en mis|intuiciones y|sentimientos", "Me baso en|observaciones|personales", "Tomo en cuenta mis|propias ideas", "Pruebo|personalmente la|tarea"],
            ["Cuando estoy|aprendiendo", "Soy una persona|abierta", "Soy una persona|reservada", "Soy una persona|racional", "Soy una persona|responsable"],
            ["Cuando|aprendo", "Me involucro", "Prefiero observar", "Prefiero evaluar las|cosas", "Prefiero asumir una|actitud activa"],
            ["Aprendo mejor|cuando", "Soy receptivo y de|mente abierta", "Soy cuidadoso", "Analizo las ideas", "Soy práctico"],
            ["Total de la suma|de cada columna", "|18", "|25", "", ""],
            ["", "EC", "OR", "CA", "EA"]
        ]);
    </script>
</body>

</html>
